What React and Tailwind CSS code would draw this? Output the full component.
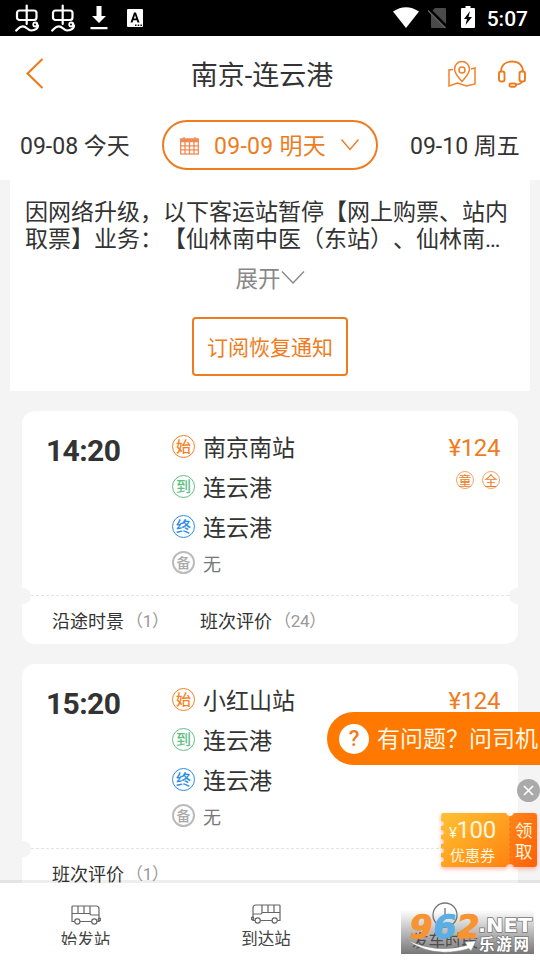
const FONT = "[font-family:Roboto,'Noto_Sans_CJK_SC',sans-serif]";

function BugIcon() {
  return (
    <svg className="h-[28px] w-[26px]" viewBox="0 0 26 28" fill="none" stroke="#fff" strokeWidth="2.200" strokeLinecap="round">
      <rect x="3" y="6.500" width="19.500" height="9.500" rx="2.500" />
      <path d="M12.700 1.500V20M2.200 26.500c2-1.200 3-4.200 6.500-4.200 4 0 5 4.200 8.500 4.200 4.500 0 7-2.500 6.800-5" />
      <circle cx="21.300" cy="20.500" r="2.200" fill="#fff" stroke="#fff" strokeWidth="1.600" />
      <circle cx="21" cy="20.500" r="1" fill="#000" stroke="none" />
    </svg>
  );
}

function StatusBar() {
  return (
    <div className="flex h-9 shrink-0 items-center bg-black text-white">
      <div className="flex items-center pl-[14px]">
        <BugIcon />
        <div className="w-[10px]" />
        <BugIcon />
        <svg className="ml-[14px] h-[24px] w-[18px]" viewBox="0 0 18 24" fill="#fff">
          <path d="M6.500 0h5v10H16l-7 7-7-7h4.500zM.5 21h17v2.300H.5z" />
        </svg>
        <div className="ml-[19px] h-[18px] w-4 rounded-[1px] bg-white">
          <svg viewBox="0 0 16 18" className="h-[18px] w-4">
            <path fillRule="evenodd" d="M3.500 13.500 7 3.500h2l3.500 10h-2l-.8-2.300H6.300l-.8 2.300zM6.900 9.500h2.200L8 6z" fill="#000" />
            <path d="M8 15.500h1.500v1.500H8zM10.700 15.500h1.500v1.500h-1.500zM13.400 15.500h1.500v1.500h-1.500z" fill="#000" />
          </svg>
        </div>
      </div>
      <div className="ml-auto flex items-center pr-[12px]">
        <svg className="mt-[-2px] h-[21px] w-[26px]" viewBox="0 0 26 21"><path d="M0 4.500Q13-4 26 4.500L13 21z" fill="#fff" /></svg>
        <svg className="ml-[9px] h-[21px] w-[20px]" viewBox="0 0 20 21">
          <path d="M7 0h10q1 0 1 1v18q0 1-1 1H4q-1 0-1-1V4z" fill="#4a4a4a" />
          <path d="M1 1.500 18.500 19" stroke="#000" strokeWidth="3.500" />
          <path d="M0 2.500 17.500 20" stroke="#666" strokeWidth="1.300" />
        </svg>
        <svg className="ml-[13px] mt-[-2px] h-[22px] w-[14px]" viewBox="0 0 14 22">
          <path d="M4.500 0h5v2H13q1 0 1 1v18q0 1-1 1H1q-1 0-1-1V3q0-1 1-1h3.500z" fill="#fff" />
          <path d="M9 5 3 13h3l-1.500 6L11 11H7.500z" fill="#000" />
        </svg>
        <span className="ml-[12px] mt-[2px] text-[21px] font-medium leading-6">5:07</span>
      </div>
    </div>
  );
}

function Header() {
  return (
    <header className="flex h-[76px] shrink-0 items-center justify-between bg-white pl-[26px] pr-[14px]">
      <svg className="h-[32px] w-[50px]" viewBox="0 0 50 32" fill="none" stroke="#ee7c1e" strokeWidth="2.200">
        <path d="M16.500 1 1.500 15.500l15 14.500" />
      </svg>
      <h1 className="pt-[3px] text-[27px] leading-8 text-[#333]">南京-连云港</h1>
      <div className="flex w-[78px] items-center justify-between">
        <svg className="h-[28px] w-[28px]" viewBox="0 0 28 28" fill="none" stroke="#ef8228" strokeWidth="1.500">
          <path d="M5 9.500 1 10v16l8.500-3 9 3L27 24V8l-4 1" />
          <path d="M14 21.500C10.500 17.500 6.500 13.500 6.500 9a7.500 7.500 0 0 1 15 0c0 4.500-4 8.500-7.500 12.500z" />
          <circle cx="14" cy="10" r="3" />
        </svg>
        <svg className="h-[28px] w-[28px]" viewBox="0 0 28 28" fill="none" stroke="#ee7c1e" strokeWidth="1.900">
          <path d="M3 12C3 5 7.500 1.500 14 1.500S25 5 25 12" />
          <rect x="1" y="11.500" width="5.500" height="10" rx="2" />
          <rect x="21.500" y="11.500" width="5.500" height="10" rx="2" />
          <path d="M24 21.500c-1 2.500-3 3-6 3" />
          <rect x="11.500" y="23.500" width="6.500" height="3.200" rx="1.500" />
        </svg>
      </div>
    </header>
  );
}

function DateBar() {
  return (
    <div className="flex h-[68px] shrink-0 items-center bg-white px-5 pb-[2px] text-[23px] leading-7 text-[#333]">
      <span className="w-[110px] whitespace-nowrap pt-[4px]">09-08 今天</span>
      <div className="ml-[32px] flex h-[50px] w-[216px] shrink-0 items-center rounded-full border-2 border-[#ee7c1e] pl-[16px] text-[#ee7c1e]">
        <svg className="h-[19px] w-[19px] shrink-0" viewBox="0 0 19 19" fill="none" stroke="#f08a55" strokeWidth="1.300">
          <rect x=".7" y="3" width="17.600" height="15" />
          <path d="M.5 4.500h18" strokeWidth="3.500" />
          <path d="M4 1v4M15 1v4M1 9.800h17M1 13.800h17M5 6v12M9.500 6v12M14 6v12" />
        </svg>
        <span className="ml-[15px] whitespace-nowrap pt-[4px] tracking-[0.3px]">09-09 明天</span>
        <svg className="ml-[15px] h-3 w-[18px] shrink-0" viewBox="0 0 18 12" fill="none" stroke="#ee7c1e" strokeWidth="1.400">
          <path d="M.5.5 9 10.500 17.500.5" />
        </svg>
      </div>
      <span className="ml-[32px] whitespace-nowrap pt-[4px]">09-10 周五</span>
    </div>
  );
}

function Notice() {
  return (
    <section className="mx-[10px] flex h-[211px] shrink-0 flex-col items-center bg-white pt-[20px] text-[#333]">
      <div className="w-[490px] whitespace-nowrap text-[23px] leading-[26.500px] [text-spacing-trim:space-all]">
        <p>因网络升级，以下客运站暂停【网上购票、站内</p>
        <p>取票】业务：【仙林南中医（东站）、仙林南…</p>
      </div>
      <div className="mt-[12px] flex items-center text-[22.500px] leading-7 text-[#888]">
        展开
        <svg className="mt-[-3px] h-[13px] w-6" viewBox="0 0 24 13" fill="none" stroke="#888" strokeWidth="1.400">
          <path d="M1 .5 12 12 23 .5" />
        </svg>
      </div>
      <button className="mt-[24px] h-[59px] w-[156px] shrink-0 rounded-[4px] border-2 border-[#ee7c1e] pt-[4px] text-[21px] text-[#ee7c1e]">订阅恢复通知</button>
    </section>
  );
}

function Stop({ mark, color, name }) {
  return (
    <div className="flex h-10 items-center">
      <span className={`mt-[-1px] flex size-[23px] items-center justify-center rounded-full border pt-px text-[15px] font-medium leading-none ${color}`}>{mark}</span>
      <span className="ml-[8px] pt-[4px] text-[23px] leading-7 text-[#333]">{name}</span>
    </div>
  );
}

function TripCard({ time, start, links }) {
  return (
    <article className="relative mx-[22px] mt-5 h-[233px] shrink-0 rounded-[13px] bg-white">
      <div className="flex h-[184px] pt-[16px]">
        <div className="w-[150px] pl-[24px] pt-[6px] text-[30px] font-bold leading-9 tracking-[-0.6px] text-[#333]">{time}</div>
        <div className="flex-1">
          <Stop mark="始" color="border-[#f5811f] text-[#f5811f]" name={start} />
          <Stop mark="到" color="border-[#5fc084] text-[#5fc084]" name="连云港" />
          <Stop mark="终" color="border-[#2b8ce6] text-[#2b8ce6]" name="连云港" />
          <div className="mt-[-1px] flex h-[33px] items-center">
            <span className="flex size-[23px] items-center justify-center rounded-full border-2 border-[#bbb] text-[14px] font-medium leading-none text-[#aaa]">备</span>
            <span className="ml-[8px] pt-[4px] text-[18px] leading-6 text-[#777]">无</span>
          </div>
        </div>
        <div className="flex flex-col items-end pr-[18px] text-[#ee7c1e]">
          <span className="mt-[5px] text-[24px] leading-8 tracking-[-0.4px]">¥124</span>
          <div className="mt-[7px] flex gap-2 text-[13px] leading-none">
            <span className="flex size-[18px] items-center justify-center rounded-full border border-[#f0a469]">童</span>
            <span className="flex size-[18px] items-center justify-center rounded-full border border-[#f0a469]">全</span>
          </div>
        </div>
      </div>
      <div className="mx-[9px] border-t border-dashed border-[#e4e4e4]" />
      <span className="absolute left-[-7px] top-[177px] size-4 rounded-full bg-[#f4f4f4]" />
      <span className="absolute right-[-7px] top-[177px] size-4 rounded-full bg-[#f4f4f4]" />
      <div className="flex h-[48px] items-center pl-[30px] pt-[3px] text-[18px] text-[#333]">
        {links.map(([label, count]) => (
          <span key={label} className="flex min-w-[148px] items-center whitespace-nowrap">{label}<span className="ml-[2px] text-[17px] tracking-[-0.3px] text-[#999]">（{count}）</span></span>
        ))}
      </div>
    </article>
  );
}

function Bus({ flip }) {
  return (
    <svg className={`h-5 w-[30px] shrink-0 ${flip ? "-scale-x-100" : ""}`} viewBox="0 0 30 20" fill="none" stroke="#666" strokeWidth="1.200">
      <path d="M3.500 16.500H1V2q0-1 1-1h23q3 0 3 3v12.500h-2M9 16.500h11.500M1 8.500h18M7 1v7.500M13 1v7.500M19 1v7.500q0 1.500 1.500 1.500H28" />
      <circle cx="6.300" cy="16.500" r="2.600" /><circle cx="23.300" cy="16.500" r="2.600" />
      <circle cx="28.500" cy="14.500" r="1.300" />
    </svg>
  );
}

function Footer() {
  return (
    <footer className="relative flex h-[77px] shrink-0 bg-white pb-[14px] text-[16.500px] leading-5 text-[#444] shadow-[0_-3px_0_rgba(0,0,0,0.065)]">
      <div className="mb-[1px] flex w-[171px] flex-col items-center overflow-hidden pt-[22px]"><Bus /><span className="mt-[6px]">始发站</span></div>
      <div className="flex w-[190px] flex-col items-center overflow-hidden pt-[21px]"><Bus flip /><span className="mt-[6px]">到达站</span></div>
      <div className="flex w-[168px] flex-col items-center pt-[19px]">
        <svg className="h-[26px] w-[26px] shrink-0" viewBox="0 0 26 26" fill="none" stroke="#777" strokeWidth="1.300"><circle cx="13" cy="13" r="12" /><path d="M13 6v7h6" /></svg>
        <span className="mt-[4px]">发车时段</span>
      </div>
    </footer>
  );
}

function Watermark() {
  return (
    <svg className="absolute left-[401px] top-[900px] h-[54px] w-[133px]" viewBox="0 0 133 54">
      <defs>
        <linearGradient id="shade" x1="0" y1="0" x2="0" y2="1">
          <stop offset="0" stopColor="#555" stopOpacity="0" />
          <stop offset="1" stopColor="#555" stopOpacity=".8" />
        </linearGradient>
      </defs>
      <rect y="10" width="133" height="44" fill="url(#shade)" />
      <g fontFamily="DejaVu Sans" fontWeight="700" fontSize="32" strokeWidth="1" transform="translate(7 38) skewX(-9)">
        <text x="0" y="0" fill="#f79431" stroke="#f79431" textLength="23" lengthAdjust="spacingAndGlyphs">9</text>
        <text x="23.500" y="0" fill="#5aaee4" stroke="#5aaee4" textLength="23" lengthAdjust="spacingAndGlyphs">6</text>
        <text x="47" y="0" fill="#f79431" stroke="#f79431" textLength="23" lengthAdjust="spacingAndGlyphs">2</text>
      </g>
      <path d="M6 40Q35 54 66 45.500l-2-3.500 11-1-5 10-2-2.500Q32 59 6 40z" fill="#fff" stroke="#888" strokeWidth=".5" />
      <g fill="#fff" stroke="#777" strokeWidth="1.500" paintOrder="stroke" fontWeight="700">
        <text x="77" y="32" fontFamily="DejaVu Sans" fontSize="20" textLength="54" lengthAdjust="spacingAndGlyphs">.NET</text>
        <text x="78" y="50" fontFamily="Noto Sans CJK SC" fontSize="15.500" textLength="50">乐游网</text>
      </g>
    </svg>
  );
}

function Coupon() {
  return (
    <div className="absolute left-[441px] top-[813px] flex h-[54px] w-[96px] text-[#fff6dc]">
      <svg className="absolute inset-0 h-[54px] w-[96px] overflow-visible drop-shadow-[0_2px_2px_rgba(255,90,50,0.45)]" viewBox="0 0 96 54">
        <defs>
          <linearGradient id="gold" x1="0" y1="0" x2="1" y2="1"><stop stopColor="#ffc233" /><stop offset="1" stopColor="#ff8210" /></linearGradient>
          <linearGradient id="red" x1="0" y1="0" x2="1" y2="1"><stop stopColor="#ff8519" /><stop offset="1" stopColor="#ff6008" /></linearGradient>
        </defs>
        <path d="M2 0H65q1 3 4 3v48q-3 0-4 3H2q-2 0-2-3v-2q3 0 3-2.500T0 44v-4q3 0 3-2.500T0 35v-4q3 0 3-2.500T0 26v-4q3 0 3-2.500T0 17v-4q3 0 3-2.500T0 8V3q0-3 2-3z" fill="url(#gold)" />
        <path d="M69 3q3 0 4-3h20q3 0 3 3v48q0 3-3 3H73q-1-3-4-3z" fill="url(#red)" />
        <path d="M69 5v46" stroke="#e47718" strokeDasharray="3 2" />
      </svg>
      <div className="relative w-[68px] whitespace-nowrap pl-[8px] pt-[4px]">
        <div className="text-[24px] leading-[26px] tracking-[-0.4px]"><span className="text-[15px]">¥</span>100</div>
        <div className="pl-[1px] text-[15px] leading-[20px]">优惠券</div>
      </div>
      <div className="relative w-7 pl-[6px] pt-[8px] text-[17.500px] leading-[21px]">领<br />取</div>
    </div>
  );
}

export default function App() {
  return (
    <div lang="zh-CN" className={`relative flex h-[960px] w-[540px] flex-col overflow-hidden bg-[#f4f4f4] ${FONT}`}>
      <StatusBar />
      <Header />
      <DateBar />
      <main className="flex min-h-0 flex-1 flex-col overflow-hidden">
        <Notice />
        <TripCard time="14:20" start="南京南站" links={[["沿途时景", 1], ["班次评价", 24]]} />
        <TripCard time="15:20" start="小红山站" links={[["班次评价", 1]]} />
      </main>
      <Footer />
      <div className="absolute left-[327px] top-[712px] flex h-[53px] w-[213px] items-center whitespace-nowrap rounded-l-full bg-[#ff7800] pl-3 text-[23px] text-[#fff8e8]">
        <span className="flex size-[30px] shrink-0 items-center justify-center rounded-full bg-white text-[22px] font-medium leading-none text-[#ee7c1e]">?</span>
        <span className="ml-[8px] pt-[4px]">有问题？问司机</span>
      </div>
      <svg className="absolute left-[517px] top-[779px] size-[23px]" viewBox="0 0 23 23">
        <circle cx="11.500" cy="11.500" r="11.500" fill="#aaa" />
        <path d="m7 7 9 9m0-9-9 9" stroke="#fff" strokeWidth="1.700" />
      </svg>
      <Coupon />
      <Watermark />
    </div>
  );
}
